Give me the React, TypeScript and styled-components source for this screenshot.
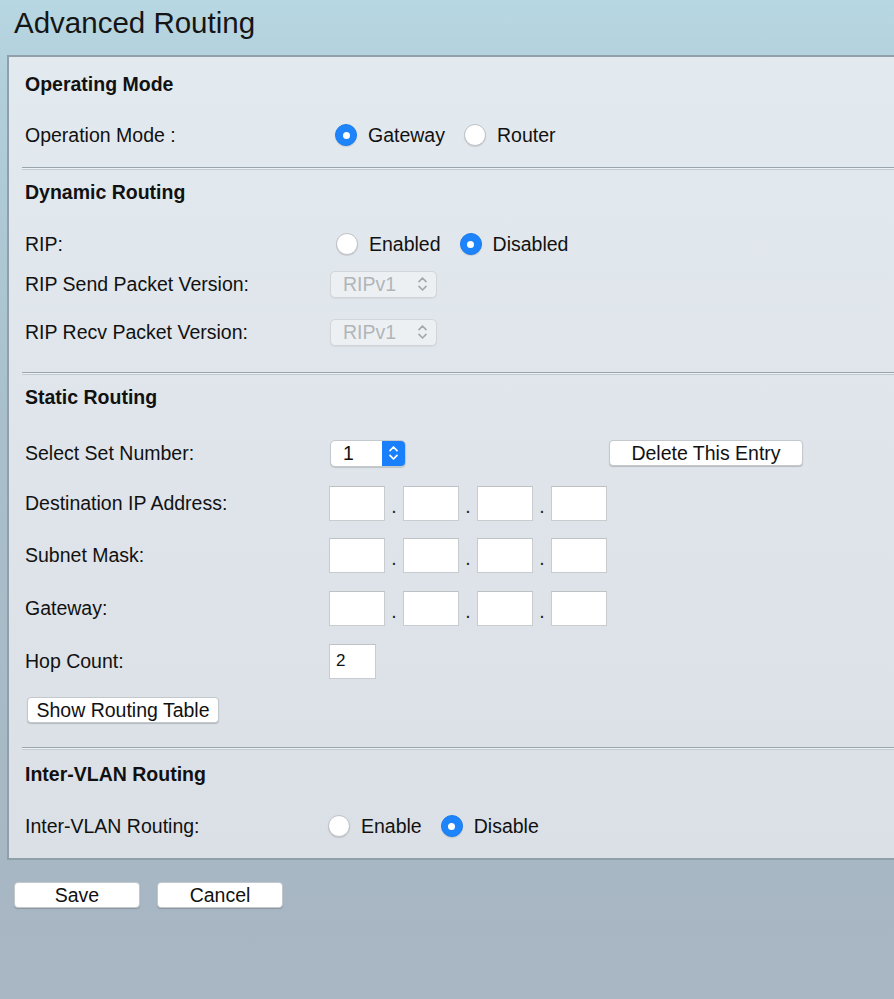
import React from 'react'
import styled, { createGlobalStyle } from 'styled-components'

const GlobalStyle = createGlobalStyle`
  html, body {
    margin: 0;
    padding: 0;
  }
  body {
    min-height: 999px;
    overflow-x: hidden;
    font-family: 'Liberation Sans', Arial, sans-serif;
    color: #111;
    background: linear-gradient(
      180deg,
      #b7d7e2 0px,
      #b1cfdb 90px,
      #a9c0cc 420px,
      #a8b7c4 860px,
      #a9b6c3 999px
    );
  }
`

const Header = styled.header`
  height: 55px;
  box-sizing: border-box;
  padding: 6px 0 0 14px;
`

const Title = styled.h1`
  margin: 0;
  font-size: 29.5px;
  font-weight: normal;
  line-height: 34px;
  color: #151515;
`

const Panel = styled.section`
  margin-left: 7px;
  margin-right: -24px;
  border: 2px solid #8fa0ab;
  border-right: none;
  padding: 15px 0 12px 16px;
  background: linear-gradient(180deg, #e3eaef 0%, #dfe5ea 45%, #dbe0e6 100%);
`

const Heading = styled.h2<{ $mt?: number }>`
  margin: ${(p) => p.$mt ?? 0}px 0 0;
  height: 24px;
  line-height: 24px;
  font-size: 19.5px;
  font-weight: bold;
  color: #111;
`

const Divider = styled.hr<{ $mt: number }>`
  margin: ${(p) => p.$mt}px 0 0 -3px;
  height: 1px;
  border: none;
  border-top: 1px solid #9aa4ad;
  border-bottom: 1px solid #c3cbd2;
  background: #eef1f4;
`

const Row = styled.div<{ $mt?: number }>`
  display: flex;
  align-items: center;
  height: 40px;
  margin-top: ${(p) => p.$mt ?? 0}px;
`

const Label = styled.div`
  width: 304px;
  flex-shrink: 0;
  font-size: 19.5px;
  color: #111;
`

const RadioGroup = styled.div<{ $offset: number }>`
  display: flex;
  align-items: center;
  margin-left: ${(p) => p.$offset}px;
`

const RadioItem = styled.label`
  display: flex;
  align-items: center;
  margin-right: 19px;
  font-size: 19.5px;
  color: #111;
`

const RadioDot = styled.span<{ $on: boolean }>`
  width: 22px;
  height: 22px;
  box-sizing: border-box;
  border-radius: 50%;
  margin-right: 11px;
  display: flex;
  align-items: center;
  justify-content: center;
  background: ${(p) => (p.$on ? '#1d84fb' : '#fff')};
  border: ${(p) => (p.$on ? '1px solid #1a7cf0' : '1px solid #bfc3c7')};
  box-shadow: 0 1px 1px rgba(0, 0, 0, 0.12);

  &::after {
    content: '';
    display: ${(p) => (p.$on ? 'block' : 'none')};
    width: 7px;
    height: 7px;
    border-radius: 50%;
    background: #fff;
  }
`

const FakeSelect = styled.div<{ $disabled?: boolean; $w: number }>`
  width: ${(p) => p.$w}px;
  height: 27px;
  box-sizing: border-box;
  margin-left: 1px;
  border-radius: 5px;
  border: 1px solid ${(p) => (p.$disabled ? '#d2d6da' : '#c4c9cd')};
  background: ${(p) => (p.$disabled ? '#edf0f3' : '#fff')};
  box-shadow: 0 1px 1px rgba(0, 0, 0, ${(p) => (p.$disabled ? 0.06 : 0.15)});
  display: flex;
  align-items: center;
  overflow: hidden;
  font-size: 19.5px;
  color: ${(p) => (p.$disabled ? '#b2b5b8' : '#111')};
`

const SelectText = styled.span`
  flex: 1;
  padding-left: 12px;
`

const ArrowBox = styled.span<{ $blue?: boolean }>`
  width: 23px;
  height: 100%;
  display: flex;
  align-items: center;
  justify-content: center;
  background: ${(p) => (p.$blue ? '#1a7ffb' : 'transparent')};
  margin-right: ${(p) => (p.$blue ? 0 : 2)}px;
`

const Chevrons = ({ color }: { color: string }) => (
  <svg width="11" height="18" viewBox="0 0 11 18">
    <path
      d="M2 6.6 L5.5 3 L9 6.6 M2 11.4 L5.5 15 L9 11.4"
      fill="none"
      stroke={color}
      strokeWidth="1.7"
      strokeLinecap="round"
      strokeLinejoin="round"
    />
  </svg>
)

const Button = styled.button<{ $w: number }>`
  width: ${(p) => p.$w}px;
  height: 26px;
  padding: 0;
  border: 1px solid #c3c8cc;
  border-radius: 4px;
  background: #fff;
  box-shadow: 0 1px 1px rgba(0, 0, 0, 0.18);
  font-family: 'Liberation Sans', Arial, sans-serif;
  font-size: 19.5px;
  line-height: 24px;
  color: #111;
`

const DeleteButton = styled(Button)`
  margin-left: 203px;
`

const ShowButton = styled(Button)`
  margin-left: 2px;
`

const IpGroup = styled.div`
  display: flex;
  align-items: center;
`

const Box = styled.input<{ $w: number }>`
  width: ${(p) => p.$w}px;
  height: 35px;
  box-sizing: border-box;
  margin: 0;
  padding: 0 6px;
  border: 1px solid #c9cccf;
  border-top-color: #bfc2c5;
  background: #fff;
  font-family: 'Liberation Sans', Arial, sans-serif;
  font-size: 17px;
  color: #111;
  outline: none;
`

const Dot = styled.span`
  width: 18px;
  text-align: center;
  font-size: 19.5px;
  line-height: 35px;
  padding-top: 6px;
  color: #222;
`

const Footer = styled.div`
  display: flex;
  gap: 17px;
  padding: 22px 0 0 14px;
`

const IpAddress = () => (
  <IpGroup>
    <Box $w={56} />
    <Dot>.</Dot>
    <Box $w={56} />
    <Dot>.</Dot>
    <Box $w={56} />
    <Dot>.</Dot>
    <Box $w={56} />
  </IpGroup>
)

interface RadioProps {
  offset: number
  options: string[]
  selected: number
}

const Radios = ({ offset, options, selected }: RadioProps) => (
  <RadioGroup $offset={offset}>
    {options.map((o, i) => (
      <RadioItem key={o}>
        <RadioDot $on={i === selected} />
        {o}
      </RadioItem>
    ))}
  </RadioGroup>
)

export default function App() {
  return (
    <>
      <GlobalStyle />
      <Header>
        <Title>Advanced Routing</Title>
      </Header>
      <Panel>
        <Heading>Operating Mode</Heading>
        <Row $mt={19}>
          <Label>Operation Mode :</Label>
          <Radios offset={6} options={['Gateway', 'Router']} selected={0} />
        </Row>

        <Divider $mt={12} />
        <Heading $mt={10}>Dynamic Routing</Heading>
        <Row $mt={20}>
          <Label>RIP:</Label>
          <Radios offset={7} options={['Enabled', 'Disabled']} selected={1} />
        </Row>
        <Row>
          <Label>RIP Send Packet Version:</Label>
          <FakeSelect $disabled $w={107}>
            <SelectText>RIPv1</SelectText>
            <ArrowBox>
              <Chevrons color="#a6aaae" />
            </ArrowBox>
          </FakeSelect>
        </Row>
        <Row $mt={8}>
          <Label>RIP Recv Packet Version:</Label>
          <FakeSelect $disabled $w={107}>
            <SelectText>RIPv1</SelectText>
            <ArrowBox>
              <Chevrons color="#a6aaae" />
            </ArrowBox>
          </FakeSelect>
        </Row>

        <Divider $mt={20} />
        <Heading $mt={10}>Static Routing</Heading>
        <Row $mt={24}>
          <Label>Select Set Number:</Label>
          <FakeSelect $w={76}>
            <SelectText>1</SelectText>
            <ArrowBox $blue>
              <Chevrons color="#fff" />
            </ArrowBox>
          </FakeSelect>
          <DeleteButton $w={194}>Delete This Entry</DeleteButton>
        </Row>
        <Row $mt={10}>
          <Label>Destination IP Address:</Label>
          <IpAddress />
        </Row>
        <Row $mt={12}>
          <Label>Subnet Mask:</Label>
          <IpAddress />
        </Row>
        <Row $mt={13}>
          <Label>Gateway:</Label>
          <IpAddress />
        </Row>
        <Row $mt={13}>
          <Label>Hop Count:</Label>
          <Box $w={47} defaultValue="2" />
        </Row>
        <Row $mt={9}>
          <ShowButton $w={192}>Show Routing Table</ShowButton>
        </Row>

        <Divider $mt={17} />
        <Heading $mt={12}>Inter-VLAN Routing</Heading>
        <Row $mt={20}>
          <Label>Inter-VLAN Routing:</Label>
          <Radios offset={-1} options={['Enable', 'Disable']} selected={1} />
        </Row>
      </Panel>
      <Footer>
        <Button $w={126}>Save</Button>
        <Button $w={126}>Cancel</Button>
      </Footer>
    </>
  )
}
